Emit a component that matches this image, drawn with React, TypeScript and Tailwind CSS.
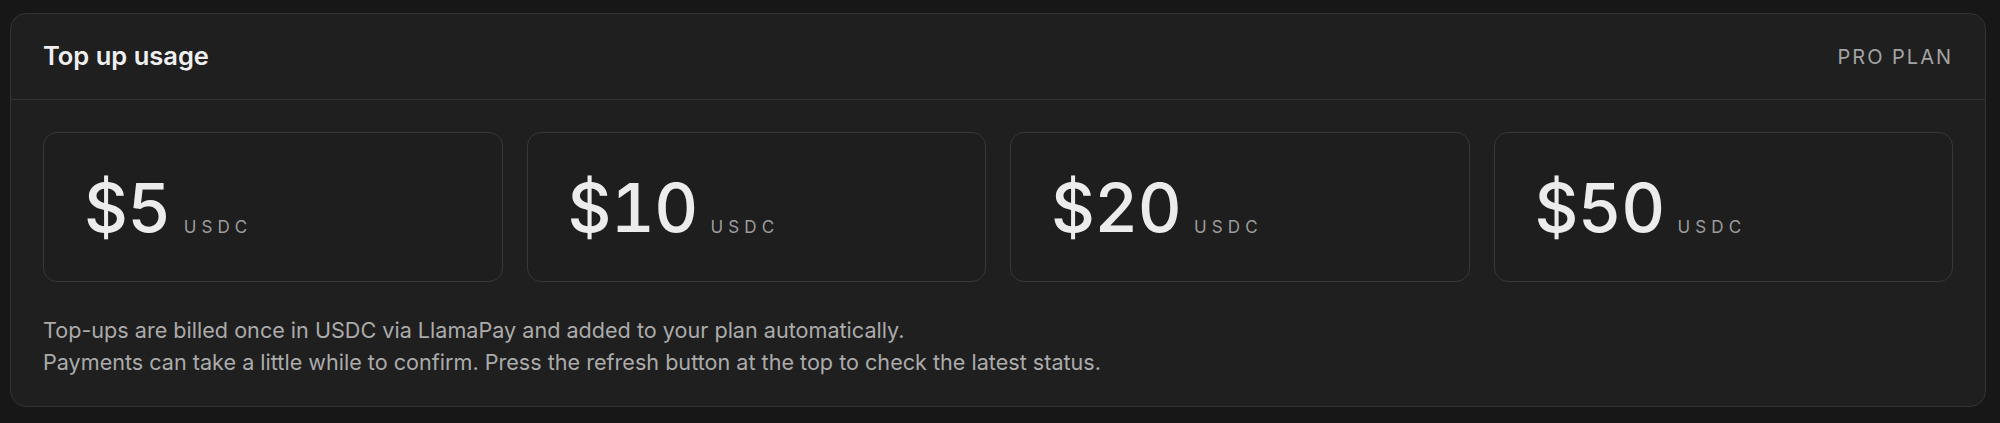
import React from "react";

const amounts = ["$5", "$10", "$20", "$50"];

function AmountCard({ amount }: { amount: string }) {
  return (
    <button
      type="button"
      className="flex h-[150px] items-center rounded-[14px] border border-[#383838] bg-[#1e1e1e] pl-[40px] text-left"
    >
      <span className="flex items-baseline gap-[13px]">
        <span className="text-[68px] font-medium tabular-nums leading-none tracking-[-0.01em] text-[#ececec]">
          {amount}
        </span>
        <span className="translate-y-[1px] text-[17px] font-normal tracking-[0.3em] text-[#9c9c9c]">USDC</span>
      </span>
    </button>
  );
}

export default function App() {
  return (
    <div
      className="min-h-[423px] w-[2000px] bg-[#171717] pl-[10px] pt-[13px]"
      style={{ fontFamily: "Inter, 'Noto Sans', sans-serif" }}
    >
      <section className="w-[1976px] rounded-2xl border border-[#333333] bg-[#1f1f1f]">
        <header className="flex h-[86px] items-center justify-between border-b border-[#333333] px-8">
          <h2 className="text-[25.5px] font-semibold text-[#efefef]">Top up usage</h2>
          <span className="text-[20px] font-normal tracking-[0.1em] text-[#a3a3a3]">PRO PLAN</span>
        </header>
        <div className="px-8 pb-[28px] pt-8">
          <div className="grid grid-cols-4 gap-6">
            {amounts.map((a) => (
              <AmountCard key={a} amount={a} />
            ))}
          </div>
          <p className="mt-8 text-[21.6px] leading-8 text-[#ababab]">
            Top-ups are billed once in USDC via LlamaPay and added to your plan automatically.
            <br />
            Payments can take a little while to confirm. Press the refresh button at the top to check the latest status.
          </p>
        </div>
      </section>
    </div>
  );
}
